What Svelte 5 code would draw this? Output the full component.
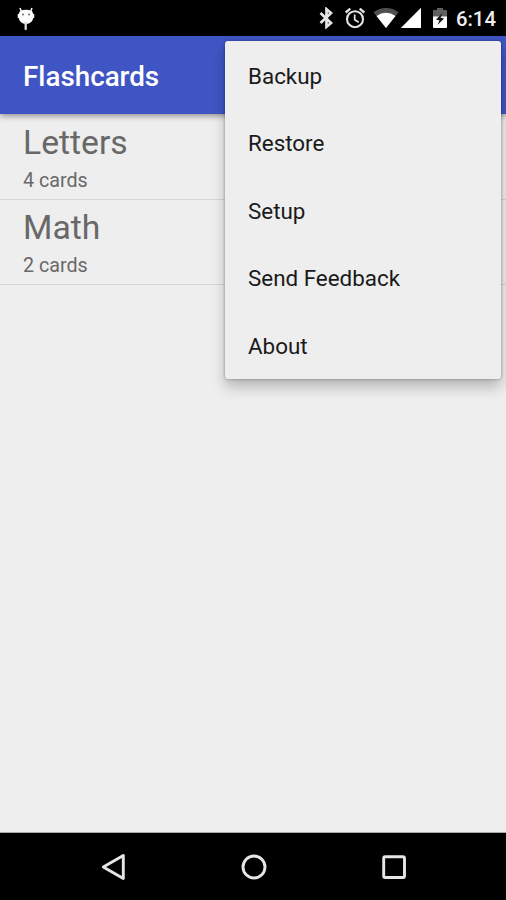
<script lang="ts">
  interface Deck {
    name: string;
    count: number;
  }

  const decks: Deck[] = [
    { name: 'Letters', count: 4 },
    { name: 'Math', count: 2 },
  ];

  const menuItems = ['Backup', 'Restore', 'Setup', 'Send Feedback', 'About'];

  let menuOpen = $state(true);
</script>

<div class="screen">
  <div class="status-bar">
    <svg class="debug" width="18" height="26" viewBox="0 0 18 26">
      <path d="M3 2l2 5M15 2l-2 5" stroke="#fff" stroke-width="1.5" />
      <path d="M3 5Q9 2.5 15 5Q17 8 16.5 11Q15.5 18 9 18Q2.5 18 1.5 11Q1 8 3 5Z" fill="#fff" />
      <path d="M1.5 8v4M16.5 8v4" stroke="#fff" stroke-width="1.5" />
      <circle cx="6" cy="8.5" r="1.1" fill="#777" />
      <circle cx="12" cy="8.5" r="1.1" fill="#777" />
      <path d="M8.7 17v6" stroke="#ddd" stroke-width="2.3" stroke-linecap="round" />
    </svg>

    <div class="indicators">
      <svg width="14" height="22" viewBox="0 0 14 22">
        <path d="M1.5 6l10.5 10L7.5 19.8V2.200L12 6l-10.500 10" fill="none" stroke="#e4e4e4" stroke-width="2.7" />
      </svg>
      <svg class="alarm" width="22" height="22" viewBox="0 0 22 22">
        <circle cx="11" cy="12.2" r="8" fill="none" stroke="#e4e4e4" stroke-width="2.1" />
        <path d="M1.7 5.5l4.600-3.900M20.300 5.500l-4.600-3.900" stroke="#e4e4e4" stroke-width="2.3" />
        <path d="M10.7 7.5v5.200l4 2.500" fill="none" stroke="#e4e4e4" stroke-width="1.7" />
      </svg>
      <svg class="wifi" width="26" height="22" viewBox="0 0 26 22">
        <path d="M13 21L.5 5.300Q6 1 13 1t12.500 4.300z" fill="#505050" />
        <path d="M13 21L3.500 9Q8 5.700 13 5.700t9.500 3.300z" fill="#fff" />
      </svg>
      <svg class="signal" width="22" height="22" viewBox="0 0 22 22">
        <path d="M.8 21L21 .8V21z" fill="#fff" />
      </svg>
      <svg class="battery" width="14" height="22" viewBox="0 0 14 22">
        <path d="M0 4q0-1 1-1h3V1h6v2h3q1 0 1 1v6H0z" fill="#606060" />
        <path d="M0 9.500h14V20q0 1-1 1H1q-1 0-1-1z" fill="#fff" />
        <path d="M9.500 6L3 12.500l3.500 1L4.500 18l6.500-6.500-3.500-1z" fill="#111" />
      </svg>
      <span class="clock">6:14</span>
    </div>
  </div>

  <header class="app-bar">
    <h1>Flashcards</h1>
  </header>

  <main class="decks">
    {#each decks as deck}
      <div class="deck">
        <div class="deck-name">{deck.name}</div>
        <div class="deck-count">{deck.count} cards</div>
      </div>
    {/each}
  </main>

  <nav class="nav-bar">
    <button aria-label="Back">
      <svg width="28" height="28" viewBox="0 0 28 28">
        <path d="M3.300 14L23.300 2.500v23z" />
      </svg>
    </button>
    <button aria-label="Home">
      <svg width="28" height="28" viewBox="0 0 28 28">
        <circle cx="14" cy="14" r="11" />
      </svg>
    </button>
    <button aria-label="Recents">
      <svg width="28" height="28" viewBox="0 0 28 28">
        <rect x="3.7" y="3.7" width="20.8" height="20.8" rx="1.5" />
      </svg>
    </button>
  </nav>

  {#if menuOpen}
    <div class="menu" role="menu">
      {#each menuItems as item}
        <button class="menu-item" role="menuitem" onclick={() => (menuOpen = false)}>{item}</button>
      {/each}
    </div>
  {/if}
</div>

<style>
  :global(body) {
    background: #eee;
  }

  .screen {
    position: relative;
    display: flex;
    flex-direction: column;
    width: 506px;
    height: 900px;
    overflow: hidden;
    background: #eee;
    font-family: Roboto, sans-serif;
  }

  svg {
    display: block;
    flex: none;
  }

  button {
    padding: 0;
    border: 0;
    background: none;
    font: inherit;
    color: inherit;
  }

  .status-bar {
    flex: none;
    display: flex;
    align-items: center;
    justify-content: space-between;
    height: 36px;
    padding: 0 10px 0 17px;
    box-sizing: border-box;
    background: #000;
  }

  .debug {
    margin-top: 1px;
  }

  .indicators {
    display: flex;
    align-items: center;
  }

  .alarm {
    margin-left: 10.5px;
  }

  .wifi {
    margin-left: 7.5px;
  }

  .signal {
    margin-left: 1px;
  }

  .battery {
    margin-left: 11px;
  }

  .clock {
    width: 40px;
    margin: 2px 0 0 9px;
    font-size: 20.3px;
    font-weight: 500;
    line-height: 24px;
    color: #eee;
  }

  .app-bar {
    position: relative;
    flex: none;
    display: flex;
    align-items: center;
    height: 78px;
    padding: 0 23px;
    background: #3f55c3;
    box-shadow: 0 2px 6px rgba(0, 0, 0, 0.4);
  }

  h1 {
    margin: 4px 0 0;
    font-size: 27.8px;
    font-weight: 500;
    line-height: 34px;
    color: #fff;
  }

  .decks {
    flex: 1;
    border-bottom: 1px solid #aaa;
  }

  .deck {
    height: 85px;
    padding: 8px 23px 0;
    box-sizing: border-box;
    border-bottom: 1px solid #d6d6d6;
    color: #686868;
  }

  .deck:first-child {
    height: 86px;
    padding-top: 9px;
  }

  .deck-name {
    font-size: 33.7px;
    line-height: 40px;
  }

  .deck-count {
    font-size: 19.7px;
    line-height: 24px;
    margin-top: 6px;
  }

  .nav-bar {
    flex: none;
    display: flex;
    justify-content: center;
    gap: 112px;
    height: 67px;
    padding-left: 1.5px;
    background: #000;
  }

  .nav-bar svg {
    fill: none;
    stroke: #e6e6e6;
    stroke-width: 2.9;
    stroke-linejoin: round;
  }

  .menu {
    position: absolute;
    top: 41px;
    right: 5px;
    width: 276px;
    border-radius: 3px;
    background: #eee;
    box-shadow: 0 8px 14px rgba(0, 0, 0, 0.24), 0 0 3px rgba(0, 0, 0, 0.35);
  }

  .menu-item {
    display: block;
    width: 100%;
    height: 67.5px;
    padding: 1.5px 23px 0;
    font-size: 22.4px;
    text-align: left;
    color: #1a1a1a;
  }
</style>
